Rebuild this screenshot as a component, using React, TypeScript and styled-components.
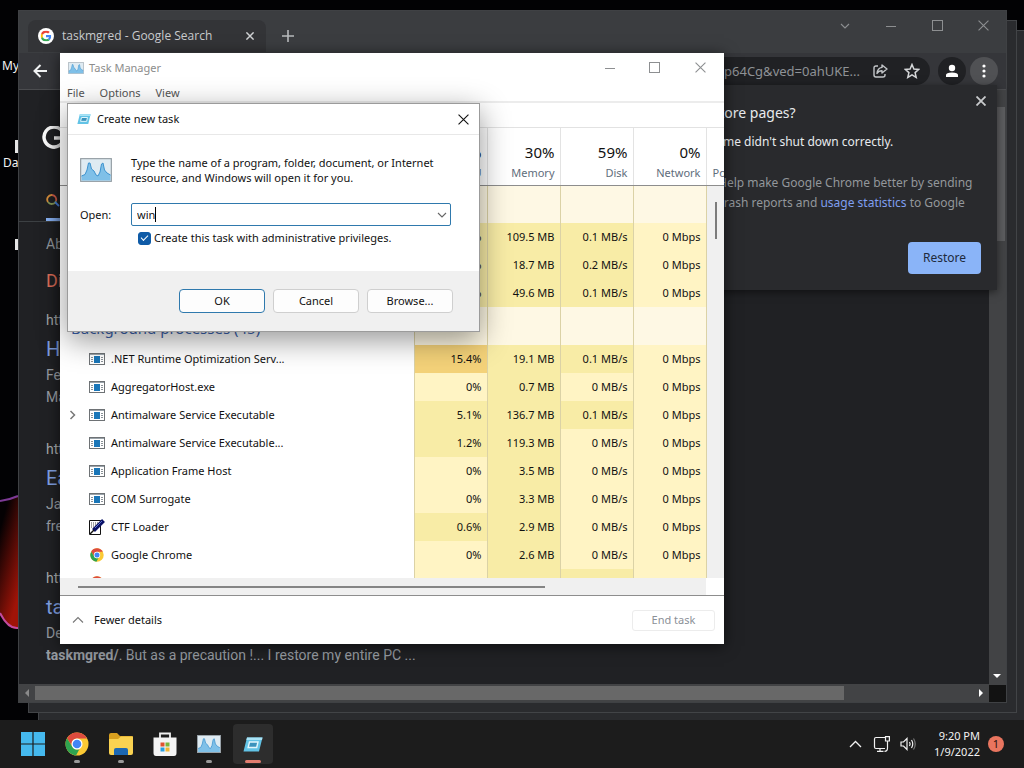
import React, { useState } from "react";
import styled, { createGlobalStyle } from "styled-components";

const ui = `"Noto Sans", "Open Sans", sans-serif`;

const Global = createGlobalStyle`
  *, *::before, *::after { box-sizing: border-box; }
  html, body { margin: 0; background: #000; }
  body { font-family: ${ui}; font-size: 11px; line-height: 16px; overflow: hidden; }
  button, input { font: inherit; color: inherit; }
  button { border: 0; padding: 0; background: none; }
  p, h1, h2, h3 { margin: 0; font: inherit; }
  svg { display: block; flex: none; }
`;

const Desktop = styled.main`
  position: relative;
  height: 100vh;
  overflow: hidden;
  background: #020204;
`;

const Wallpaper = styled.svg`
  position: absolute;
  left: 0;
  top: 0;
`;

const DesktopLabel = styled.span<{ $x: number; $y: number }>`
  position: absolute;
  left: ${(p) => p.$x}px;
  top: ${(p) => p.$y}px;
  color: #f4f4f4;
  font-size: 12px;
`;

/* ---------- Browser windows ---------- */

const GhostWindow = styled.div<{ $step: number }>`
  position: absolute;
  left: ${(p) => 18 + p.$step * 10}px;
  top: ${(p) => 10 + p.$step * 10}px;
  right: ${(p) => 17 - p.$step * 10}px;
  bottom: ${(p) => 65 - p.$step * 10}px;
  border: 1px solid #424447;
  background: #2a2b2e;
`;

const Browser = styled.section`
  position: absolute;
  left: 18px;
  top: 10px;
  right: 17px;
  bottom: 65px;
  display: flex;
  flex-direction: column;
  border: 1px solid #3f4144;
  background: #202124;
  color: #bdc1c6;
`;

const TabStrip = styled.div`
  display: flex;
  align-items: flex-start;
  height: 42px;
  padding-left: 9px;
  background: #3b3d40;
`;

const Tab = styled.div`
  display: flex;
  align-items: center;
  gap: 8px;
  width: 238px;
  height: 32px;
  margin-top: 9px;
  padding: 0 8px 0 10px;
  border-radius: 8px 8px 0 0;
  background: #333437;
  color: #c9cbce;
`;

const TabTitle = styled.span`
  flex: 1;
  font-family: "Open Sans", "Noto Sans", sans-serif;
  font-size: 12px;
`;

const IconButton = styled.button<{ $w?: number; $h?: number }>`
  display: flex;
  align-items: center;
  justify-content: center;
  width: ${(p) => p.$w ?? 16}px;
  height: ${(p) => p.$h ?? 16}px;
`;

const NewTab = styled(IconButton)`
  margin: 17px 0 0 14px;
`;

const WindowControls = styled.div`
  display: flex;
  margin-left: auto;
  color: #8d8f91;
`;

const Toolbar = styled.div`
  display: flex;
  align-items: center;
  height: 36px;
  padding: 0 8px;
  background: #35363a;
`;

const Omnibox = styled.div`
  display: flex;
  flex: 1;
  align-items: center;
  justify-content: flex-end;
  gap: 16px;
  height: 28px;
  margin: 0 8px 0 24px;
  padding-right: 10px;
  border-radius: 14px;
  background: #202124;
  color: #8f9296;
  font-size: 13px;
`;

const UrlText = styled.span`
  margin-right: -4px;
`;

const RoundButton = styled.button<{ $size: number; $bg: string }>`
  display: flex;
  align-items: center;
  justify-content: center;
  width: ${(p) => p.$size}px;
  height: ${(p) => p.$size}px;
  border-radius: 50%;
  background: ${(p) => p.$bg};
`;

const ToolbarEnd = styled.div`
  display: flex;
  align-items: center;
  gap: 4px;
`;

const Viewport = styled.div`
  display: flex;
  flex: 1;
  min-height: 0;
  border-top: 1px solid #4b4c4f;
`;

const ResultsPage = styled.div`
  flex: 1;
  overflow: hidden;
  font-family: Roboto, sans-serif;
  font-size: 14px;
  line-height: 22px;
  color: #969ba1;
`;

const SearchHeader = styled.header`
  display: flex;
  flex-direction: column;
  height: 132px;
  padding: 36px 0 0 23px;
  border-bottom: 1px solid #3c4043;
`;

const SearchTab = styled.a`
  display: block;
  width: 60px;
  height: 33px;
  margin: auto 0 0 4px;
  border-bottom: 3px solid #8ab4f8;
  padding-top: 5px;
`;

const ResultsList = styled.div`
  padding: 11px 0 0 27px;
`;

const DidYouMean = styled.p`
  margin: 14px 0 16px;
  color: #e0705a;
  font-size: 18px;
  line-height: 24px;
`;

const Result = styled.article`
  display: flex;
  flex-direction: column;
  margin-bottom: 30px;
`;

const ResultUrl = styled.span`
  color: #a6a9ad;
`;

const ResultTitle = styled.a`
  margin: 6px 0 3px;
  color: #7f9fe0;
  font-size: 20px;
  line-height: 24px;
  text-decoration: none;
`;

const ResultLine = styled.p`
  line-height: 22px;
  white-space: nowrap;
`;

const VerticalBar = styled.div`
  display: flex;
  flex-direction: column;
  align-items: flex-end;
  width: 17px;
  padding: 5px 1px 0;
  background: #424345;
`;

const VerticalThumb = styled.div`
  width: 8px;
  height: 134px;
  margin-top: 12px;
  background: #5c5d5f;
`;

const ScrollArrow = styled(IconButton)`
  margin: auto 0 0;
`;

const HorizontalBar = styled.div`
  display: flex;
  align-items: center;
  height: 18px;
  background: #424345;
`;

const HorizontalThumb = styled.div`
  flex: 0 0 82%;
  height: 14px;
  background: #686868;
`;

const Corner = styled.div`
  width: 17px;
  height: 17px;
  background: #121212;
`;

const BarArrow = styled(IconButton)<{ $end?: boolean }>`
  margin-left: ${(p) => (p.$end ? "auto" : "0")};
`;

const RestoreBubble = styled.aside`
  position: absolute;
  top: 74px;
  right: 9px;
  display: flex;
  flex-direction: column;
  width: 317px;
  height: 205px;
  padding: 16px;
  background: #292a2d;
  box-shadow: 0 2px 8px rgba(0, 0, 0, 0.5);
  color: #e8eaed;
`;

const BubbleClose = styled(IconButton)`
  position: absolute;
  top: 8px;
  right: 8px;
`;

const BubbleTitle = styled.h2`
  font-size: 14px;
  line-height: 24px;
`;

const BubbleText = styled.p`
  margin-top: 8px;
  font-size: 12px;
  line-height: 18px;
`;

const BubbleNote = styled.p`
  margin: 22px 0 0 22px;
  color: #93979b;
  font-size: 12px;
  line-height: 20px;
  white-space: nowrap;
`;

const NoteLink = styled.a`
  color: #7f9ff0;
  text-decoration: none;
`;

const RestoreButton = styled.button`
  width: 73px;
  height: 32px;
  margin: auto 0 0 auto;
  border-radius: 4px;
  background: #8ab4f8;
  color: #202a3c;
  font-size: 12px;
`;

/* ---------- Task Manager ---------- */

const Manager = styled.section`
  position: absolute;
  left: 60px;
  top: 53px;
  display: flex;
  flex-direction: column;
  width: 664px;
  background: #fff;
  box-shadow: 0 2px 14px rgba(0, 0, 0, 0.6);
  color: #111;
`;

const TitleBar = styled.header<{ $muted?: boolean }>`
  display: flex;
  align-items: center;
  gap: ${(p) => (p.$muted ? 5 : 6)}px;
  height: ${(p) => (p.$muted ? 29 : 30)}px;
  padding-left: ${(p) => (p.$muted ? 8 : 9)}px;
  color: ${(p) => (p.$muted ? "#8c8c8c" : "#111")};
`;

const MenuBar = styled.nav`
  display: flex;
  gap: 15px;
  height: 21px;
  padding: 3px 7px 0;
  border-bottom: 2px solid #ececec;
  color: #555;
`;

const MenuItem = styled.button`
  height: 16px;
`;

const Band = styled.div`
  height: 25px;
  border-bottom: 1px solid #e2e2e2;
`;

const Viewer = styled.div`
  position: relative;
  height: 450px;
  overflow: hidden;
`;

const ProcessTable = styled.table`
  width: 100%;
  table-layout: fixed;
  border-collapse: collapse;
`;

const NameCol = styled.col`
  width: auto;
`;

const ValueCol = styled.col`
  width: 73px;
`;

const EndCol = styled.col`
  width: 18px;
`;

const HeadCell = styled.th`
  height: 57px;
  padding: 14px 5px 0 0;
  border-bottom: 1px solid #8d8d8d;
  border-left: 1px solid #e3e3e3;
  color: #5f6d7b;
  font-weight: 400;
  text-align: right;
  vertical-align: top;
  white-space: nowrap;
`;

const NameHead = styled(HeadCell)`
  border-left: 0;
`;

const EndHead = styled(HeadCell)`
  padding: 37px 0 0 6px;
  text-align: left;
  overflow: hidden;
`;

const Total = styled.span`
  display: block;
  margin-bottom: 3px;
  color: #111;
  font-size: 15px;
  line-height: 20px;
`;

const heat = { none: "#fef8e4", low: "#fff4c4", mid: "#f8eca6", high: "#f4d279" };
type Heat = keyof typeof heat;

const Cell = styled.td<{ $heat: Heat; $tall?: boolean }>`
  height: ${(p) => (p.$tall ? 38 : 28)}px;
  padding: 0 5px 0 0;
  border-left: 1px solid #dbd2a6;
  background: ${(p) => heat[p.$heat]};
  text-align: right;
`;

const NameCell = styled.td`
  padding: 0;
`;

const EndCell = styled.td`
  padding: 0;
  border-left: 1px solid #dbd2a6;
  background: #f0f0f0;
`;

const GroupName = styled.td`
  padding: 4px 0 0 11px;
  color: #3a62ad;
  font-size: 15px;
  line-height: 20px;
`;

const ProcessName = styled.div`
  display: flex;
  align-items: center;
  gap: 6px;
  padding-left: 7px;
`;

const Expander = styled.span`
  width: 16px;
  color: #777;
`;

const ProcessIcon = styled.span`
  display: flex;
  justify-content: center;
  width: 16px;
`;

const ListThumb = styled.div`
  position: absolute;
  top: 74px;
  right: 7px;
  width: 2px;
  height: 37px;
  background: #7c7c7c;
`;

const ListScroll = styled.div`
  height: 17px;
  margin-right: 18px;
  padding: 8px 0 0 18px;
  background: #f0f0f0;
`;

const ListScrollThumb = styled.div`
  width: 467px;
  height: 2px;
  background: #858585;
`;

const ManagerFooter = styled.footer`
  display: flex;
  align-items: center;
  justify-content: space-between;
  height: 49px;
  padding: 0 9px 0 12px;
  border-top: 1px solid #8d8d8d;
`;

const FewerDetails = styled.button`
  display: flex;
  align-items: center;
  gap: 10px;

  svg {
    color: #777;
  }
`;

const EndTask = styled.button`
  width: 83px;
  height: 21px;
  border: 1px solid #ececec;
  border-radius: 3px;
  color: #8b9097;
`;

/* ---------- Create new task dialog ---------- */

const Dialog = styled.form`
  position: absolute;
  left: 67px;
  top: 103px;
  width: 413px;
  border: 1px solid #9b9b9b;
  background: #fff;
  box-shadow: 0 8px 28px rgba(0, 0, 0, 0.42);
  color: #111;
`;

const DialogBody = styled.div`
  height: 137px;
  padding: 20px 28px 0 12px;
  border-top: 1px solid #e8e8e8;
`;

const Intro = styled.div`
  display: flex;
  align-items: center;
  gap: 19px;
`;

const IntroText = styled.p`
  line-height: 15px;
  white-space: nowrap;
`;

const OpenRow = styled.div`
  display: flex;
  align-items: center;
  margin-top: 18px;
`;

const OpenLabel = styled.label`
  width: 51px;
`;

const Combo = styled.div`
  display: flex;
  flex: 1;
  align-items: center;
  height: 23px;
  padding: 0 2px 0 5px;
  border: 1px solid #2f79ad;
  border-radius: 2px;
`;

const ComboInput = styled.input`
  field-sizing: content;
  width: auto;
  max-width: 280px;
  border: 0;
  padding: 0;
  outline: 0;
  background: none;
`;

const Caret = styled.span`
  width: 1px;
  height: 15px;
  background: #000;
`;

const ComboToggle = styled(IconButton)`
  margin-left: auto;
  color: #666;
`;

const AdminLabel = styled.label`
  display: flex;
  align-items: center;
  gap: 3px;
  margin: 4px 0 0 58px;
`;

const AdminCheck = styled.input`
  appearance: none;
  width: 13px;
  height: 13px;
  margin: 0;
  border: 1px solid #0f5ba7;
  border-radius: 3px;
  background: #fff;
  &:checked {
    background: #0f5ba7;
  }
  &:checked::after {
    content: "";
    display: block;
    width: 7px;
    height: 4px;
    margin: 2px;
    border-left: 1px solid #fff;
    border-bottom: 1px solid #fff;
    rotate: -45deg;
  }
`;

const DialogFooter = styled.footer`
  display: flex;
  justify-content: flex-end;
  gap: 8px;
  height: 60px;
  padding: 18px 26px 0 0;
  background: #f0f0f0;
`;

const DialogButton = styled.button<{ $primary?: boolean }>`
  width: 86px;
  height: 24px;
  border: 1px solid ${(p) => (p.$primary ? "#2f79ad" : "#cfcfcf")};
  border-radius: 4px;
  background: #fdfdfd;
`;

/* ---------- Taskbar ---------- */

const Taskbar = styled.footer`
  position: absolute;
  left: 0;
  right: 0;
  bottom: 0;
  display: flex;
  align-items: center;
  gap: 4px;
  height: 48px;
  padding: 0 20px 0 13px;
  background: #1c1c1c;
  color: #f2f2f2;
`;

const TaskButton = styled.button<{ $active?: boolean }>`
  display: flex;
  flex-direction: column;
  align-items: center;
  width: 40px;
  height: 40px;
  padding-top: 8px;
  border-radius: 4px;
  background: ${(p) => (p.$active ? "#2d2d2d" : "transparent")};
`;

const Running = styled.span<{ $active?: boolean }>`
  width: ${(p) => (p.$active ? 16 : 6)}px;
  height: 3px;
  margin-top: 4px;
  border-radius: 2px;
  background: ${(p) => (p.$active ? "#e27d70" : "#9a9a9a")};
`;

const Tray = styled.div`
  display: flex;
  align-items: center;
  gap: 8px;
  margin-left: auto;
`;

const Clock = styled.time`
  margin-left: 10px;
  text-align: right;
`;

const NoticeCount = styled.span`
  width: 16px;
  height: 16px;
  border-radius: 50%;
  background: #e9755f;
  color: #2a1310;
  text-align: center;
`;

/* ---------- Drawings ---------- */

type G = { size?: number; color?: string; w?: number };

const Cross = ({ size = 10, color = "currentColor", w = 1 }: G) => (
  <svg width={size} height={size} viewBox="0 0 10 10" stroke={color} strokeWidth={w} fill="none">
    <path d="M0.5 0.5 9.5 9.5M9.5 0.5 0.5 9.5" />
  </svg>
);
const Minus = () => (
  <svg width="10" height="10" stroke="currentColor"><path d="M0 5.5H10" /></svg>
);
const Square = () => (
  <svg width="11" height="11" stroke="currentColor" fill="none"><rect x=".5" y=".5" width="10" height="10" /></svg>
);
const Chevron = ({ up, right }: { up?: boolean; right?: boolean }) => (
  <svg width="12" height="12" viewBox="0 0 12 12" stroke="currentColor" fill="none">
    <path d={up ? "M1 8.5 6 3.5 11 8.5" : right ? "M3.500 2 7.500 6 3.500 10" : "M2 4 6 8 10 4"} strokeWidth={right ? 1.5 : 1.1} />
  </svg>
);

const GoogleG = ({ size = 12 }: G) => (
  <svg width={size} height={size} viewBox="0 0 48 48">
    <path fill="#EA4335" d="M24 9.5c3.5 0 6.700 1.200 9.200 3.600l6.900-6.900C35.900 2.400 30.500 0 24 0 14.600 0 6.500 5.400 2.600 13.200l8 6.200C12.400 13.700 17.700 9.500 24 9.500z" />
    <path fill="#4285F4" d="M47 24.500c0-1.600-.2-3.100-.4-4.500H24v9h12.900c-.6 3-2.300 5.500-4.800 7.200l7.700 6C44.400 38 47 31.800 47 24.500z" />
    <path fill="#FBBC05" d="M10.500 28.600a14.500 14.500 0 0 1 0-9.200l-8-6.200a24 24 0 0 0 0 21.600z" />
    <path fill="#34A853" d="M24 48c6.500 0 11.900-2.100 15.900-5.800l-7.700-6c-2.200 1.400-4.900 2.300-8.200 2.300-6.300 0-11.600-4.200-13.500-9.900l-8 6.200C6.500 42.600 14.600 48 24 48z" />
  </svg>
);

const GoogleFavicon = () => (
  <svg width="16" height="16" viewBox="0 0 16 16">
    <circle cx="8" cy="8" r="8" fill="#fff" />
    <svg x="2.500" y="2.500" width="11" height="11" viewBox="0 0 11 11"><GoogleG size={11} /></svg>
  </svg>
);

const ChromeLogo = ({ size = 16 }: G) => (
  <svg width={size} height={size} viewBox="0 0 48 48">
    <circle cx="24" cy="24" r="23" fill="#fbc934" />
    <path d="M24 13H44A23 23 0 0 0 4.100 12.500L14.500 29A11 11 0 0 1 24 13Z" fill="#dd4b3e" />
    <path d="M4.100 12.500 14.500 29.500A11 11 0 0 0 29 34L22 47A23 23 0 0 1 4.100 12.500Z" fill="#2ea350" />
    <circle cx="24" cy="24" r="11" fill="#fff" />
    <circle cx="24" cy="24" r="8.600" fill="#4285f4" />
  </svg>
);

const MonitorIcon = ({ w = 16 }: G) => (
  <svg width={w} height={w * 0.75} viewBox="0 0 32 24">
    <rect x="0.500" y="0.500" width="31" height="23" rx="1" fill="#dfebf2" stroke="#9aa3a9" strokeWidth="1.500" />
    <path d="M1.500 22.500V18L5 16.500 7 12 8.500 5 10 5 11.500 11 14 13 16 17 18 18 20 14 21.500 6 23 5 24.500 12 27 15 30.500 17V22.500Z" fill="#7fc0e8" />
    <path d="M1.500 18 5 16.500 7 12 8.500 5 10 5 11.500 11 14 13 16 17 18 18 20 14 21.500 6 23 5 24.500 12 27 15 30.500 17" fill="none" stroke="#3d93cf" strokeWidth="1" />
  </svg>
);

const RunIcon = ({ w = 14 }: G) => (
  <svg width={w} height={w * 0.75} viewBox="0 0 20 15">
    <path d="M4 0.500H19.500L16 14.500H0.500Z" fill="#62c3e6" />
    <path d="M4 0.500H19.500L19 3H3.400Z" fill="#a9e3f6" />
    <path d="M6.500 5H15L13.700 10.500H5.100Z" fill="#3b93bd" stroke="#e2f6fc" strokeWidth="1.400" />
  </svg>
);

const ExeIcon = () => (
  <svg width="16" height="12" viewBox="0 0 16 12">
    <rect x=".5" y=".5" width="15" height="11" fill="#fff" stroke="#6e7275" />
    <path d="M1 1.500H15" stroke="#9aa3aa" />
    <rect x="5" y="3" width="6" height="7" fill="#1a76b8" />
    <path d="M2 4.500H4M2 6.500H4M2 8.500H4M12 4.500H14M12 6.500H14M12 8.500H14" stroke="#8a9298" />
  </svg>
);

const CtfIcon = () => (
  <svg width="16" height="16" viewBox="0 0 16 16">
    <path d="M.5 1.500H11.500V15.500H.5Z" fill="#fff" stroke="#111" />
    <path d="M2 4H9M2 6H8M2 8H6" stroke="#444" strokeDasharray="1 1" />
    <path d="M14.500 1.500 4.500 11.500" stroke="#0b1266" strokeWidth="4" />
    <path d="M5 11 1 15" stroke="#111" strokeWidth="1.500" />
    <path d="M13 2 6 9" stroke="#5a6fd0" />
  </svg>
);

const Triangle = ({ d, color = "#fff" }: { d: string; color?: string }) => (
  <svg width="8" height="8" viewBox="0 0 8 8"><path d={d} fill={color} /></svg>
);

/* ---------- Data ---------- */

type Row = { name: string; icon: "exe" | "ctf" | "chrome"; open?: boolean; values: string[]; heats: Heat[] };

const appRows: { values: string[] }[] = [
  { values: ["%", "109.5 MB", "0.1 MB/s", "0 Mbps"] },
  { values: ["%", "18.7 MB", "0.2 MB/s", "0 Mbps"] },
  { values: ["%", "49.6 MB", "0.1 MB/s", "0 Mbps"] },
];

const rows: Row[] = [
  { name: ".NET Runtime Optimization Serv...", icon: "exe", values: ["15.4%", "19.1 MB", "0.1 MB/s", "0 Mbps"], heats: ["high", "mid", "mid", "low"] },
  { name: "AggregatorHost.exe", icon: "exe", values: ["0%", "0.7 MB", "0 MB/s", "0 Mbps"], heats: ["low", "mid", "low", "low"] },
  { name: "Antimalware Service Executable", icon: "exe", open: true, values: ["5.1%", "136.7 MB", "0.1 MB/s", "0 Mbps"], heats: ["mid", "mid", "mid", "low"] },
  { name: "Antimalware Service Executable...", icon: "exe", values: ["1.2%", "119.3 MB", "0 MB/s", "0 Mbps"], heats: ["mid", "mid", "low", "low"] },
  { name: "Application Frame Host", icon: "exe", values: ["0%", "3.5 MB", "0 MB/s", "0 Mbps"], heats: ["low", "mid", "low", "low"] },
  { name: "COM Surrogate", icon: "exe", values: ["0%", "3.3 MB", "0 MB/s", "0 Mbps"], heats: ["low", "mid", "low", "low"] },
  { name: "CTF Loader", icon: "ctf", values: ["0.6%", "2.9 MB", "0 MB/s", "0 Mbps"], heats: ["mid", "mid", "low", "low"] },
  { name: "Google Chrome", icon: "chrome", values: ["0%", "2.6 MB", "0 MB/s", "0 Mbps"], heats: ["low", "mid", "low", "low"] },
  { name: "", icon: "chrome", values: ["", "", "", ""], heats: ["low", "mid", "mid", "low"] },
];

const results = [
  { url: "htt", title: "H", lines: ["Fe", "Ma"] },
  { url: "htt", title: "Ea", lines: ["Ja", "fre"] },
];

const processIcons = { exe: <ExeIcon />, ctf: <CtfIcon />, chrome: <ChromeLogo size={14} /> };

const GroupCells = () => (
  <>
    {[0, 1, 2, 3].map((i) => <Cell key={i} $heat="none" $tall />)}
    <EndCell />
  </>
);

function BrowserWindow() {
  return (
    <Browser aria-label="Browser">
      <TabStrip>
        <Tab>
          <GoogleFavicon />
          <TabTitle>taskmgred - Google Search</TabTitle>
          <IconButton aria-label="Close tab"><Cross size={8} w={1.8} color="#d0d2d4" /></IconButton>
        </Tab>
        <NewTab aria-label="New tab">
          <svg width="12" height="12" stroke="#b8babc" strokeWidth="1.600"><path d="M6 0V12M0 6H12" /></svg>
        </NewTab>
        <WindowControls>
          <IconButton $w={46} $h={29} aria-label="Search tabs"><Chevron /></IconButton>
          <IconButton $w={46} $h={29} aria-label="Minimize"><Minus /></IconButton>
          <IconButton $w={46} $h={29} aria-label="Maximize"><Square /></IconButton>
          <IconButton $w={46} $h={29} aria-label="Close"><Cross size={11} /></IconButton>
        </WindowControls>
      </TabStrip>
      <Toolbar>
        <IconButton $w={26} aria-label="Back">
          <svg width="14" height="14" fill="none" stroke="#f1f3f4" strokeWidth="2"><path d="M14 7H1.500M7.500 1 1.500 7 7.500 13" /></svg>
        </IconButton>
        <Omnibox>
          <UrlText>p64Cg&amp;ved=0ahUKE...</UrlText>
          <IconButton aria-label="Share">
            <svg width="15" height="14" viewBox="0 0 15 14" fill="none" stroke="#c3c6c9" strokeWidth="1.400">
              <path d="M5 2H3Q1 2 1 4V11Q1 13 3 13H10Q12 13 12 11V10" />
              <path d="M9 1 14 5 9 9V6.800Q5.500 6.800 4 9.500 4.500 4 9 3.400Z" strokeLinejoin="round" />
            </svg>
          </IconButton>
          <IconButton aria-label="Bookmark">
            <svg width="16" height="16" viewBox="0 0 16 16" fill="none" stroke="#d5d7d9" strokeWidth="1.500">
              <path d="M8 1.500 9.900 6 14.800 6.400 11.100 9.600 12.200 14.400 8 11.800 3.800 14.400 4.900 9.600 1.200 6.400 6.100 6Z" />
            </svg>
          </IconButton>
        </Omnibox>
        <ToolbarEnd>
          <RoundButton $size={28} $bg="#202124" aria-label="Profile">
            <svg width="14" height="14" fill="#fff"><circle cx="7" cy="4" r="3.200" /><path d="M1 13V11Q1 8.500 7 8.500 13 8.500 13 11V13Z" /></svg>
          </RoundButton>
          <RoundButton $size={28} $bg="#505154" aria-label="Menu">
            <svg width="4" height="14" fill="#fff"><circle cx="2" cy="2" r="1.600" /><circle cx="2" cy="7" r="1.600" /><circle cx="2" cy="12" r="1.600" /></svg>
          </RoundButton>
        </ToolbarEnd>
      </Toolbar>
      <Viewport>
        <ResultsPage>
          <SearchHeader>
            <svg width="26" height="24" viewBox="0 0 26 24" fill="none" stroke="#fff" strokeWidth="3.500"><path d="M20 5A10 10 0 1 0 22 12H12" /></svg>
            <SearchTab href="#" aria-label="All results">
              <svg width="14" height="14" fill="none" strokeWidth="1.800">
                <path d="M2 9A4.500 4.500 0 0 1 6 2" stroke="#d9903c" />
                <path d="M6 2A4.500 4.500 0 0 1 10 8" stroke="#d9604c" />
                <path d="M10 8 A4.500 4.500 0 0 1 2 9" stroke="#8a9a58" />
                <path d="M9 9 13 13" stroke="#4a86e8" />
              </svg>
            </SearchTab>
          </SearchHeader>
          <ResultsList>
            <p>Ab</p>
            <DidYouMean>Di</DidYouMean>
            {results.map((r) => (
              <Result key={r.title}>
                <ResultUrl>{r.url}</ResultUrl>
                <ResultTitle href="#">{r.title}</ResultTitle>
                {r.lines.map((l) => <ResultLine key={l}>{l}</ResultLine>)}
              </Result>
            ))}
            <Result>
              <ResultUrl>htt</ResultUrl>
              <ResultTitle href="#">ta</ResultTitle>
              <ResultLine>De</ResultLine>
              <ResultLine><b>taskmgred/</b>. But as a precaution !... I restore my entire PC ...</ResultLine>
            </Result>
          </ResultsList>
        </ResultsPage>
        <VerticalBar>
          <VerticalThumb />
          <ScrollArrow aria-label="Scroll down"><Triangle d="M0 2H8L4 6Z" /></ScrollArrow>
        </VerticalBar>
      </Viewport>
      <HorizontalBar>
        <BarArrow aria-label="Scroll left"><Triangle d="M6 0V8L2 4Z" color="#8a8a8a" /></BarArrow>
        <HorizontalThumb />
        <BarArrow $end aria-label="Scroll right"><Triangle d="M2 0V8L6 4Z" /></BarArrow>
        <Corner />
      </HorizontalBar>
      <RestoreBubble>
        <BubbleClose aria-label="Close"><Cross size={10} w={1.8} color="#c9cbcd" /></BubbleClose>
        <BubbleTitle>Restore pages?</BubbleTitle>
        <BubbleText>Chrome didn't shut down correctly.</BubbleText>
        <BubbleNote>
          Help make Google Chrome better by sending<br />
          crash reports and <NoteLink href="#">usage statistics</NoteLink> to Google
        </BubbleNote>
        <RestoreButton>Restore</RestoreButton>
      </RestoreBubble>
    </Browser>
  );
}

function TaskManager() {
  return (
    <Manager aria-label="Task Manager">
      <TitleBar $muted>
        <MonitorIcon w={16} />
        <h1>Task Manager</h1>
        <WindowControls>
          <IconButton $w={45} $h={28} aria-label="Minimize"><Minus /></IconButton>
          <IconButton $w={45} $h={28} aria-label="Maximize"><Square /></IconButton>
          <IconButton $w={47} $h={28} aria-label="Close"><Cross size={11} /></IconButton>
        </WindowControls>
      </TitleBar>
      <MenuBar>
        <MenuItem>File</MenuItem>
        <MenuItem>Options</MenuItem>
        <MenuItem>View</MenuItem>
      </MenuBar>
      <Band />
      <Viewer>
        <ProcessTable>
          <colgroup>
            <NameCol />
            <ValueCol /><ValueCol /><ValueCol /><ValueCol />
            <EndCol />
          </colgroup>
          <thead>
            <tr>
              <NameHead aria-label="Name" />
              <HeadCell><Total>%</Total>CPU</HeadCell>
              <HeadCell><Total>30%</Total>Memory</HeadCell>
              <HeadCell><Total>59%</Total>Disk</HeadCell>
              <HeadCell><Total>0%</Total>Network</HeadCell>
              <EndHead>Po</EndHead>
            </tr>
          </thead>
          <tbody>
            <tr><NameCell /><GroupCells /></tr>
            {appRows.map((r, i) => (
              <tr key={i}>
                <NameCell />
                {r.values.map((v, j) => <Cell key={j} $heat={j === 3 ? "low" : "mid"}>{v}</Cell>)}
                <EndCell />
              </tr>
            ))}
            <tr><GroupName>Background processes (45)</GroupName><GroupCells /></tr>
            {rows.map((r, i) => (
              <tr key={i}>
                <NameCell>
                  <ProcessName>
                    <Expander>{r.open && <Chevron right />}</Expander>
                    <ProcessIcon>{processIcons[r.icon]}</ProcessIcon>
                    {r.name}
                  </ProcessName>
                </NameCell>
                {r.values.map((v, j) => <Cell key={j} $heat={r.heats[j]}>{v}</Cell>)}
                <EndCell />
              </tr>
            ))}
          </tbody>
        </ProcessTable>
        <ListThumb />
      </Viewer>
      <ListScroll><ListScrollThumb /></ListScroll>
      <ManagerFooter>
        <FewerDetails><Chevron up />Fewer details</FewerDetails>
        <EndTask disabled>End task</EndTask>
      </ManagerFooter>
    </Manager>
  );
}

function NewTaskDialog() {
  const [command, setCommand] = useState("win");
  return (
    <Dialog onSubmit={(e) => e.preventDefault()}>
      <TitleBar>
        <RunIcon w={14} />
        <h2>Create new task</h2>
        <WindowControls>
          <IconButton type="button" $w={32} $h={28} aria-label="Close"><Cross size={11} color="#111" /></IconButton>
        </WindowControls>
      </TitleBar>
      <DialogBody>
        <Intro>
          <MonitorIcon w={32} />
          <IntroText>
            Type the name of a program, folder, document, or Internet<br />
            resource, and Windows will open it for you.
          </IntroText>
        </Intro>
        <OpenRow>
          <OpenLabel htmlFor="command">Open:</OpenLabel>
          <Combo>
            <ComboInput id="command" value={command} onChange={(e) => setCommand(e.target.value)} />
            <Caret />
            <ComboToggle type="button" $w={12} aria-label="Recent commands"><Chevron /></ComboToggle>
          </Combo>
        </OpenRow>
        <AdminLabel>
          <AdminCheck type="checkbox" defaultChecked />
          Create this task with administrative privileges.
        </AdminLabel>
      </DialogBody>
      <DialogFooter>
        <DialogButton $primary>OK</DialogButton>
        <DialogButton type="button">Cancel</DialogButton>
        <DialogButton type="button">Browse...</DialogButton>
      </DialogFooter>
    </Dialog>
  );
}

function SystemTaskbar() {
  return (
    <Taskbar>
      <TaskButton aria-label="Start">
        <svg width="24" height="24" fill="#45b9ee"><path d="M0 0H11.400V11.400H0ZM12.600 0H24V11.400H12.600ZM0 12.600H11.400V24H0ZM12.600 12.600H24V24H12.600Z" /></svg>
      </TaskButton>
      <TaskButton aria-label="Chrome"><ChromeLogo size={24} /><Running /></TaskButton>
      <TaskButton aria-label="Files">
        <svg width="26" height="24" viewBox="0 0 26 24">
          <path d="M1 3Q1 1 3 1H9L12 4H24Q25 4 25 6V20H1Z" fill="#d9a01f" />
          <path d="M1 7H10L13 4.500H25V21Q25 23 23 23H3Q1 23 1 21Z" fill="#f9d251" />
          <path d="M6 23V18Q6 16 8 16H18Q20 16 20 18V23Z" fill="#1c68b3" />
        </svg>
        <Running />
      </TaskButton>
      <TaskButton aria-label="Store">
        <svg width="24" height="24" viewBox="0 0 24 24">
          <path d="M7 6V1.500H17V6" fill="none" stroke="#f0f0f0" strokeWidth="1.800" />
          <path d="M0.500 5.500H23.500V21Q23.500 24 21 24H3Q0.500 24 0.500 21Z" fill="#f4f4f4" />
          <path d="M7.500 10.500H11.500V14.500H7.500Z" fill="#e0522f" /><path d="M12.500 10.500H16.500V14.500H12.500Z" fill="#7cb53a" />
          <path d="M7.500 15.500H11.500V19.500H7.500Z" fill="#2a9fe0" /><path d="M12.500 15.500H16.500V19.500H12.500Z" fill="#f2b632" />
        </svg>
      </TaskButton>
      <TaskButton aria-label="Task Manager">
        <svg width="24" height="24" viewBox="0 0 32 32"><svg y="4" width="32" height="24"><MonitorIcon w={32} /></svg></svg>
        <Running />
      </TaskButton>
      <TaskButton $active aria-label="Create new task">
        <svg width="20" height="24" viewBox="0 0 20 24"><svg y="5" width="20" height="15"><RunIcon w={20} /></svg></svg>
        <Running $active />
      </TaskButton>
      <Tray>
        <IconButton $w={18} aria-label="Show hidden icons">
          <svg width="13" height="8" fill="none" stroke="#f2f2f2" strokeWidth="1.300"><path d="M1 7 6.500 1.500 12 7" /></svg>
        </IconButton>
        <IconButton $w={20} aria-label="Network">
          <svg width="18" height="16" fill="none" stroke="#f2f2f2" strokeWidth="1.200">
            <path d="M12 1.500H3Q1.500 1.500 1.500 3V11Q1.500 12.500 3 12.500H12M7 12.500V15M4 15.400H10.500M12.500 .6H16.400V5H12.500ZM14.500 5V12Q14.500 15.400 11.500 15.400" />
          </svg>
        </IconButton>
        <IconButton $w={16} aria-label="Volume">
          <svg width="16" height="14" fill="none" stroke="#f2f2f2" strokeWidth="1.200">
            <path d="M1 5V9H3.500L7 12.500V1.500L3.500 5ZM9.500 5Q10.800 7 9.500 9M11.500 3Q14 7 11.500 11" /><path d="M13.500 1.500Q17 7 13.500 12.500" stroke="#777" />
          </svg>
        </IconButton>
        <Clock>9:20 PM<br />1/9/2022</Clock>
        <NoticeCount>1</NoticeCount>
      </Tray>
    </Taskbar>
  );
}

export default function App() {
  return (
    <>
      <Global />
      <Desktop>
        <Wallpaper width="40" height="768" viewBox="0 0 40 768">
          <defs>
            <linearGradient id="glow" x1="0" y1="0" x2="0.500" y2="1">
              <stop offset="0.200" stopColor="#050103" />
              <stop offset="1" stopColor="#a01408" />
            </linearGradient>
          </defs>
          <path d="M0 501Q9 500 18 496V629Q8 630 0 612Z" fill="url(#glow)" />
          <path d="M0 501Q9 500 18 496" fill="none" stroke="#7d3a95" strokeWidth="2" />
          <path d="M0 613Q8 629 18 628" fill="none" stroke="#c24ba0" strokeWidth="2" />
          <path d="M15 140H18V153H15ZM15 239H18V250H15Z" fill="#e6e6e6" />
        </Wallpaper>
        <DesktopLabel $x={2} $y={58}>My</DesktopLabel>
        <DesktopLabel $x={3} $y={155}>Da</DesktopLabel>
        <GhostWindow $step={2} />
        <GhostWindow $step={1} />
        <BrowserWindow />
        <TaskManager />
        <NewTaskDialog />
        <SystemTaskbar />
      </Desktop>
    </>
  );
}
